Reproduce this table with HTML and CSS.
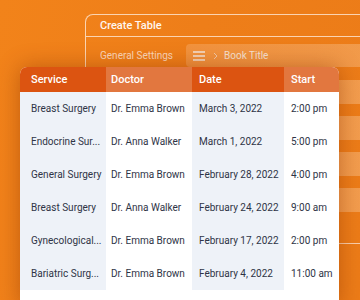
FILE: index.html
```html
<!DOCTYPE html>
<html>
<head>
<meta charset="utf-8">
<link rel="stylesheet" href="styles.css">
</head>
<body>
<div class="scene">
  <div class="panel">
    <div class="panel-head">Create Table</div>
    <div class="settings">
      <div class="label">General Settings</div>
      <div class="input">
        <svg class="burger" width="12" height="10" viewBox="0 0 12 10"><path d="M0 1h12M0 5h12M0 9h12" stroke="#f3e6dc" stroke-width="1.6"/></svg>
        <svg class="chev" width="5" height="8" viewBox="0 0 5 8"><path d="M1 1l3 3-3 3" fill="none" stroke="#f1c9a8" stroke-width="1"/></svg>
        <span class="crumb">Book Title</span>
      </div>
    </div>
    <div class="bands">
      <div class="band"></div>
      <div class="band"></div>
      <div class="band"></div>
      <div class="band"></div>
    </div>
    <div class="rule"></div>
  </div>
  <div class="card">
    <table class="tbl">
      <colgroup>
        <col class="c1"><col class="c2"><col class="c3"><col class="c4">
      </colgroup>
      <thead>
        <tr><th class="s">Service</th><th class="d">Doctor</th><th class="t">Date</th><th class="st">Start</th></tr>
      </thead>
      <tbody>
        <tr><td class="s">Breast Surgery</td><td class="d">Dr. Emma Brown</td><td class="t">March 3, 2022</td><td class="st">2:00 pm</td></tr>
        <tr><td class="s">Endocrine Sur...</td><td class="d">Dr. Anna Walker</td><td class="t">March 1, 2022</td><td class="st">5:00 pm</td></tr>
        <tr><td class="s">General Surgery</td><td class="d">Dr. Emma Brown</td><td class="t">February 28, 2022</td><td class="st">4:00 pm</td></tr>
        <tr><td class="s">Breast Surgery</td><td class="d">Dr. Anna Walker</td><td class="t">February 24, 2022</td><td class="st">9:00 am</td></tr>
        <tr><td class="s">Gynecological...</td><td class="d">Dr. Emma Brown</td><td class="t">February 17, 2022</td><td class="st">2:00 pm</td></tr>
        <tr><td class="s">Bariatric Surg...</td><td class="d">Dr. Emma Brown</td><td class="t">February 4, 2022</td><td class="st">11:00 am</td></tr>
      </tbody>
    </table>
  </div>
</div>
</body>
</html>
```
FILE: styles.css
```css
* { box-sizing: border-box; }
html, body {
  margin: 0;
  padding: 0;
  width: 360px;
  height: 300px;
  overflow: hidden;
}
body {
  background: linear-gradient(100deg, #f2831a 0%, #ee7e19 50%, #ec7c18 100%);
  font-family: Roboto, "Liberation Sans", sans-serif;
}
.scene {
  display: grid;
  width: 360px;
  height: 300px;
  overflow: hidden;
}
.panel, .card { grid-area: 1 / 1; }

.panel {
  margin: 14px 0 0 85px;
  width: 320px;
  height: 300px;
  border-top: 1px solid rgba(255, 240, 228, 0.75);
  border-left: 1px solid rgba(255, 240, 228, 0.75);
  border-top-left-radius: 8px;
}
.panel-head {
  height: 22px;
  line-height: 21px;
  padding-left: 14px;
  color: #fff6ef;
  font-size: 11px;
  font-weight: 500;
  border-bottom: 1px solid rgba(255, 240, 228, 0.75);
}
.settings {
  display: flex;
  align-items: center;
  padding-top: 7px;
}
.label {
  width: 100px;
  padding-left: 14px;
  color: rgba(255, 240, 230, 0.8);
  font-size: 10px;
}
.input {
  flex: 1;
  height: 23px;
  display: flex;
  align-items: center;
  background: linear-gradient(90deg, rgba(255, 220, 190, 0.22), rgba(255, 230, 200, 0.3));
  border-radius: 4px;
  padding-left: 7px;
}
.burger { display: block; }
.chev { display: block; margin-left: 8px; }
.crumb {
  margin-left: 6px;
  font-size: 10px;
  color: #f6e3d4;
}
.bands {
  display: flex;
  flex-direction: column;
  gap: 12px;
  padding-top: 13px;
  padding-left: 100px;
}
.band {
  height: 24px;
  background: linear-gradient(90deg, rgba(255, 215, 175, 0.25), rgba(255, 225, 190, 0.35));
}
.rule {
  margin-top: 31px;
  height: 1px;
  background: rgba(255, 235, 220, 0.75);
}

.card {
  margin: 67px 0 0 20px;
  width: 319px;
  height: 240px;
  border-radius: 7px 7px 0 0;
  overflow: hidden;
  background: #fff;
  box-shadow: 0 0 22px rgba(130, 45, 0, 0.45);
}
.tbl {
  border-collapse: collapse;
  table-layout: fixed;
  width: 319px;
}
.c1 { width: 86px; }
.c2 { width: 86px; }
.c3 { width: 92px; }
.c4 { width: 55px; }
th, td {
  padding: 0;
  text-align: left;
  white-space: nowrap;
  overflow: hidden;
}
th {
  height: 25px;
  font-size: 11px;
  font-weight: 500;
  color: #fff;
}
td {
  height: 33px;
  font-size: 10px;
  color: #2e3446;
}
.s { padding-left: 11px; }
.d { padding-left: 5px; }
.t { padding-left: 7px; }
.st { padding-left: 7px; }
th.s, th.t { background: #dc5411; }
th.d, th.st { background: #e2773f; }
td.s, td.t { background: #eef2f8; }
td.d, td.st { background: #ffffff; }
```
